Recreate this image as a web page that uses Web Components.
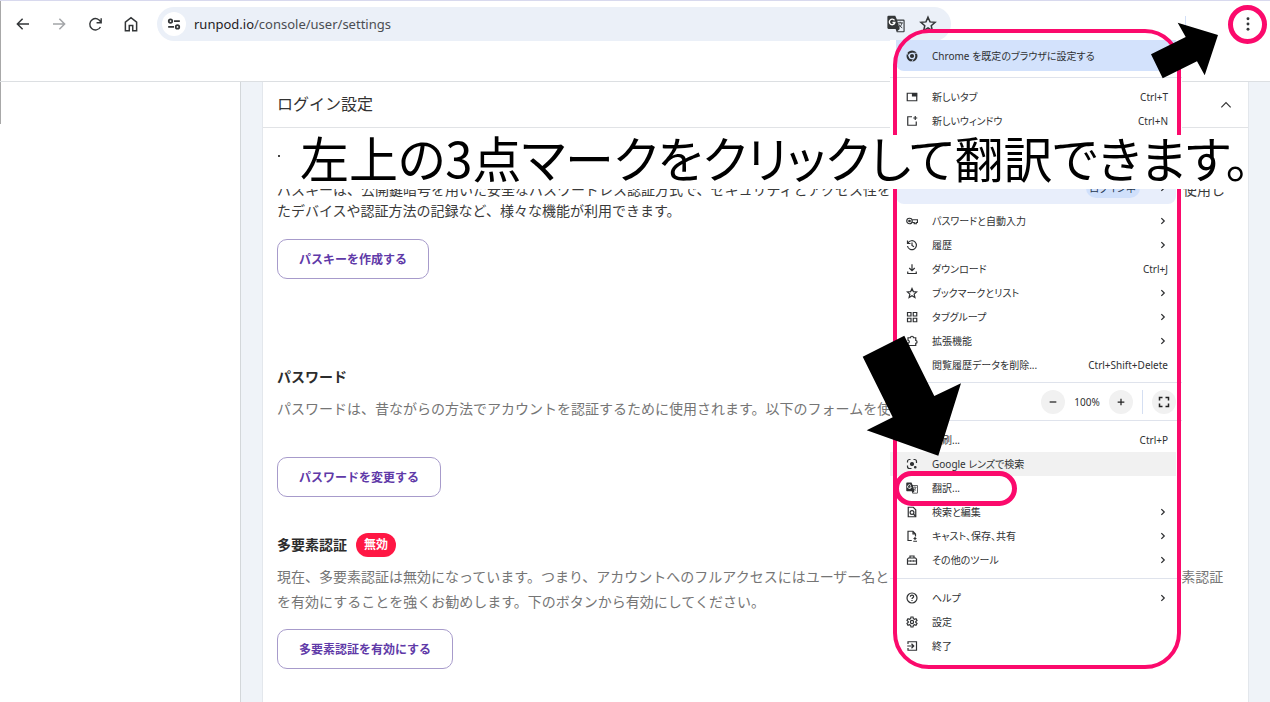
<!DOCTYPE html>
<html lang="ja">
<head>
<meta charset="utf-8">
<meta name="viewport" content="width=device-width, initial-scale=1">
<title>ログイン設定</title>
<style>
  html, body { margin: 0; min-height: 100%; }
  body {
    position: relative;
    min-height: 100vh;
    overflow: hidden;
    background: #fff;
    color: #333;
    font-family: "Noto Sans CJK JP", "Noto Sans", sans-serif;
  }
</style>
</head>
<body>
<browser-toolbar url-host="runpod.io" url-path="/console/user/settings"></browser-toolbar>

<settings-page>
  <settings-card heading="ログイン設定">
    <settings-section class="passkey" action="パスキーを作成する">パスキーは、公開鍵暗号を用いた安全なパスワードレス認証方式で、セキュリティとアクセス性を<menu-gap></menu-gap>使用したデバイスや認証方法の記録など、様々な機能が利用できます。</settings-section>
    <settings-section class="password" heading="パスワード" action="パスワードを変更する">パスワードは、昔ながらの方法でアカウントを認証するために使用されます。以下のフォームを使</settings-section>
    <settings-section class="mfa" heading="多要素認証" badge="無効" action="多要素認証を有効にする">現在、多要素認証は無効になっています。つまり、アカウントへのフルアクセスにはユーザー名と<menu-gap></menu-gap>素認証を有効にすることを強くお勧めします。下のボタンから有効にしてください。</settings-section>
  </settings-card>
</settings-page>

<browser-menu>
  <menu-item class="promo" icon="chrome">Chrome を既定のブラウザに設定する</menu-item>
  <menu-rule></menu-rule>
  <menu-item icon="tab" hint="Ctrl+T">新しいタブ</menu-item>
  <menu-item icon="window" hint="Ctrl+N">新しいウィンドウ</menu-item>
  <menu-profile>ログイン中</menu-profile>
  <menu-item icon="key" more>パスワードと自動入力</menu-item>
  <menu-item icon="history" more>履歴</menu-item>
  <menu-item icon="download" hint="Ctrl+J">ダウンロード</menu-item>
  <menu-item icon="star" more>ブックマークとリスト</menu-item>
  <menu-item icon="grid" more>タブグループ</menu-item>
  <menu-item icon="puzzle" more>拡張機能</menu-item>
  <menu-item icon="none" hint="Ctrl+Shift+Delete">閲覧履歴データを削除...</menu-item>
  <menu-rule class="tight"></menu-rule>
  <menu-zoom></menu-zoom>
  <menu-rule class="after-zoom"></menu-rule>
  <menu-item icon="none" hint="Ctrl+P">印刷...</menu-item>
  <menu-item class="active" icon="lens">Google レンズで検索</menu-item>
  <menu-item icon="translate">翻訳...</menu-item>
  <menu-item icon="find" more>検索と編集</menu-item>
  <menu-item icon="cast" more>キャスト、保存、共有</menu-item>
  <menu-item icon="toolbox" more>その他のツール</menu-item>
  <menu-rule></menu-rule>
  <menu-item icon="help" more>ヘルプ</menu-item>
  <menu-item icon="gear">設定</menu-item>
  <menu-item icon="exit">終了</menu-item>
</browser-menu>

<guide-marks>左上の3点マークをクリックして翻訳できます。</guide-marks>

<script>
const ICONS = {
  back: '<path d="M20 12H5M11.500 5L4.500 12l7 7"/>',
  forward: '<path d="M4 12h15M12.500 5l7 7-7 7"/>',
  reload: '<path d="M19 15.500A8 8 0 1 1 19.500 9M20 3v6.500h-6.500"/>',
  home: '<path d="M4.500 21V9.500L12 3.500l7.500 6V21h-5.200v-7H9.700v7z"/>',
  tune: '<circle cx="6" cy="7" r="3"/><path d="M12 7h10M2 17h10"/><circle cx="18" cy="17" r="3"/>',
  star: '<path d="M12 3l2.700 6.200 6.700.6-5.100 4.400 1.500 6.600L12 17.300l-5.800 3.500 1.500-6.600-5.100-4.400 6.700-.6z"/>',
  translate: '<path fill="currentColor" stroke="none" d="M2 1h9l2.200 5H22a1.500 1.500 0 0 1 1.500 1.500v14A1.500 1.500 0 0 1 22 23h-9l-1.500-4.500H2A1.500 1.500 0 0 1 .500 17V2.500A1.500 1.500 0 0 1 2 1zM13.700 7.500l3.300 11-3.300 3.200H22V7.500z" fill-rule="evenodd"/><path stroke="#fff" stroke-width="1.800" d="M10 7.300A3.700 3.700 0 1 0 10.500 10H7.300"/><path stroke-width="1.300" d="M14.500 10.500h6.500M17.500 9v1.500M20 10.500c-.6 3-2.500 5-4.500 6.500M15.800 12.500c1 2 2.500 3.500 4.500 4.700"/>',
  chrome: '<circle cx="12" cy="12" r="8.800" stroke-width="4.400"/><circle cx="12" cy="12" r="4.200" fill="currentColor" stroke="none"/><path stroke="#d3e2fc" stroke-width="1.600" d="M12 6.500h11M7.200 14.700L1.800 5.400M16.800 14.700l-5.400 9.300"/>',
  tab: '<path d="M2.500 4.500h19v15h-19z"/><path d="M13 5h8v5h-8z" fill="currentColor"/>',
  window: '<path d="M12 3.500H3.500v17h17V13M18.500 2v8M14.500 6h8"/>',
  key: '<circle cx="7" cy="12" r="5.500"/><circle cx="7" cy="12" r="1.500" fill="currentColor"/><path d="M12.500 9.500H23v5.500h-2.500v2.500h-4V15h-4"/>',
  history: '<path d="M4 8a9 9 0 1 1-1 6M3 3v6h6M12 7v6l4 2.500"/>',
  download: '<path d="M12 2.500V15M6.500 10l5.500 5.500 5.500-5.500M3.500 17v4h17v-4"/>',
  grid: '<path d="M3 3h7v7H3zM14.500 3h7v7h-7zM3 14.500h7v7H3zM14.500 14.500h7v7h-7z"/>',
  puzzle: '<path d="M4 5.500h5c0-4 6-4 6 0h4.500V11c3.500 0 3.500 5.500 0 5.500V21H4v-5c3.500 0 3.500-5.500 0-5.500z"/>',
  lens: '<path d="M3 9V7a4 4 0 0 1 4-4h2M15 3h2a4 4 0 0 1 4 4v3M3 15v2a4 4 0 0 0 4 4h4"/><circle cx="12" cy="12" r="3" fill="currentColor"/><circle cx="18.500" cy="18.500" r="1.500" fill="currentColor"/>',
  find: '<path d="M4.500 2.500h10l5 5v14h-15z"/><circle cx="12" cy="13" r="3.800"/><path d="M15 16l4.500 5"/>',
  cast: '<path d="M11.500 21H4V2.500h10l5 5.500v5M14 3v5h5M18 14v6M15 17h6M14.500 22.500H22"/>',
  toolbox: '<path d="M3 20.500V10.500L5 8h14l2 2.500v10zM8 8V4h8v4M3 14h18M9 12.500v3M15 12.500v3"/>',
  help: '<circle cx="12" cy="12" r="10"/><path d="M8.800 9.500c0-4.500 6.500-4 6.500-.3 0 2.500-3.300 2.500-3.300 5M12 16.200v2"/>',
  gear: '<path d="M10 2h4l.7 3.300 2.200 1.200L20 5.500l2 3.500-2.400 2.200v1.800L22 15l-2 3.500-3.100-1-2.200 1.200L14 22h-4l-.7-3.300-2.200-1.200-3.100 1L2 15l2.400-2v-1.800L2 9l2-3.500 3.100 1 2.200-1.200z"/><circle cx="12" cy="12" r="3.200"/>',
  exit: '<path d="M4 8V3.500h17v17H4V16M2.500 12H15M11 7.500l4.500 4.500-4.500 4.500"/>',
  more: '<path d="M8 5l7 7-7 7"/>',
  up: '<path d="M4 16l8-8 8 8"/>',
  minus: '<path d="M4 12h16"/>',
  plus: '<path d="M4 12h16M12 4v16"/>',
  full: '<path d="M3 9V3h6M15 3h6v6M21 15v6h-6M9 21H3v-6"/>',
  dots: '<g fill="currentColor" stroke="none"><circle cx="12" cy="4" r="2.200"/><circle cx="12" cy="12" r="2.200"/><circle cx="12" cy="20" r="2.200"/></g>',
  none: ''
};
const icon = (name, size, weight = 2) =>
  `<svg width="${size}" height="${size}" viewBox="0 0 24 24" fill="none" stroke="currentColor" stroke-width="${weight}" aria-hidden="true">${ICONS[name]}</svg>`;

class Base extends HTMLElement {
  connectedCallback() {
    if (!this.shadowRoot) this.attachShadow({ mode: 'open' }).innerHTML = this.render();
  }
}

customElements.define('browser-toolbar', class extends Base {
  render() {
    return `<style>
      :host { display: block; box-sizing: border-box; height: 82px; border-top: 1px solid #d8d9ee; border-bottom: 1px solid #dcdfe2; background: linear-gradient(#a8a8a8, #a8a8a8) 0 0 / 1px 100% no-repeat #fff; color: #333638; }
      nav { display: flex; align-items: center; gap: 16px; height: 34px; padding: 6px 12px 0 13px; }
      button { display: grid; place-items: center; width: 20px; height: 20px; padding: 0; border: 0; background: none; color: inherit; flex: none; }
      button:disabled { color: #a3a5a8; }
      svg { display: block; }
      .bar { flex: 1; display: flex; align-items: center; box-sizing: border-box; height: 34px; padding: 0 13px 0 5px; border-radius: 17px; background: #ebf0f8; gap: 12px; min-width: 0; }
      .bar .site { width: 24px; height: 24px; border-radius: 50%; background: #fff; }
      a { flex: 1; margin-left: -4px; font: 13px/20px "Noto Sans", sans-serif; color: #4a4d52; text-decoration: none; white-space: nowrap; overflow: hidden; }
      b { font-weight: 400; color: #1f2124; }
      .tools { display: flex; justify-content: flex-end; width: 255px; flex: none; }
      .tools i { width: 1px; height: 16px; margin-right: 36px; background: #d3e0f8; }
    </style>
    <nav aria-label="ブラウザ">
      <button aria-label="戻る">${icon('back', 18)}</button>
      <button aria-label="進む" disabled>${icon('forward', 18)}</button>
      <button aria-label="再読み込み">${icon('reload', 17)}</button>
      <button aria-label="ホーム">${icon('home', 18)}</button>
      <div class="bar">
        <button class="site" aria-label="サイト情報">${icon('tune', 14, 3)}</button>
        <a href="#"><b>${this.getAttribute('url-host')}</b>${this.getAttribute('url-path')}</a>
        <button aria-label="翻訳">${icon('translate', 18)}</button>
        <button aria-label="ブックマーク">${icon('star', 18)}</button>
      </div>
      <div class="tools"><i></i></div>
      <button aria-label="メニュー">${icon('dots', 16)}</button>
    </nav>`;
  }
});

customElements.define('settings-page', class extends Base {
  render() {
    return `<style>
      :host { display: grid; grid-template-columns: 241px 1fr; min-height: calc(100vh - 82px); }
      aside { border-right: 1px solid #d3d7da; background: linear-gradient(#a8a8a8, #a8a8a8) 0 0 / 1px 42px no-repeat #fff; }
      main { padding: 0 21px; background: #eff3f8; display: grid; }
    </style><aside></aside><main><slot></slot></main>`;
  }
});

customElements.define('settings-card', class extends Base {
  render() {
    return `<style>
      :host { display: block; border: solid #e3e7ec; border-width: 0 1px; background: #fff; }
      header { display: flex; align-items: center; justify-content: space-between; height: 45px; padding: 0 14px; border-bottom: 1px solid #e1e3e6; }
      h1 { margin: 0; padding-bottom: 4px; font-size: 16px; line-height: 24px; font-weight: 400; color: #333; }
      button { display: grid; place-items: center; width: 16px; height: 16px; padding: 0; border: 0; background: none; color: #333; }
      .body { padding: 0 14px; }
    </style>
    <header><h1>${this.getAttribute('heading')}</h1><button aria-label="閉じる">${icon('up', 14)}</button></header>
    <div class="body"><slot></slot></div>`;
  }
});

/* Keeps the run of a line clear beneath the open menu. */
customElements.define('menu-gap', class extends Base {
  render() {
    return '<style>:host { display: inline-block; width: 292px; }</style>';
  }
});

customElements.define('settings-section', class extends Base {
  render() {
    const h = this.getAttribute('heading'), b = this.getAttribute('badge');
    return `<style>
      :host { display: block; }
      :host(.passkey) { padding-top: 51px; }
      :host(.password) { padding-top: 86px; }
      :host(.mfa) { padding-top: 36px; }
      header { display: flex; align-items: center; gap: 9px; height: 24px; margin-bottom: 7px; }
      h2 { margin: 0; padding-bottom: 2px; font-size: 14px; line-height: 22px; font-weight: 700; color: #2c2c2c; }
      header span { padding: 0 8px 2px; border-radius: 12px; background: #ff1744; color: #fff; font-size: 12px; line-height: 22px; font-weight: 700; }
      p { margin: 0; font-size: 14px; line-height: 25px; color: #757575; font-weight: 400; }
      :host(.passkey) p { line-height: 21px; color: #3a3a3a; }
      button { display: block; height: 40px; padding: 0 21px; border: 1px solid #a79bcb; border-radius: 10px; background: #fff; color: #5f3aa8; font: 700 12px/20px "Noto Sans CJK JP", sans-serif; }
      :host(.passkey) button { margin-top: 18px; }
      :host(.password) button { margin-top: 36px; }
      :host(.mfa) button { margin-top: 15px; }
    </style>
    ${h ? `<header><h2>${h}</h2>${b ? `<span>${b}</span>` : ''}</header>` : ''}
    <p><slot></slot></p>
    <button>${this.getAttribute('action')}</button>`;
  }
});

customElements.define('browser-menu', class extends Base {
  render() {
    return `<style>
      :host { position: absolute; top: 40px; right: 88px; display: block; width: 292px; padding-bottom: 8px; background: #fff; color: #2f3133; font: 10px/16px "Noto Sans", "Noto Sans CJK JP", sans-serif; font-feature-settings: "palt"; border-radius: 0 0 36px 36px; }
    </style><div role="menu"><slot></slot></div>`;
  }
});

customElements.define('menu-rule', class extends Base {
  render() {
    return `<style>
      :host { display: block; height: 1px; margin: 6px 0 7px; background: #dfe3ec; }
      :host(.tight) { margin: 5px 0 0; }
      :host(.after-zoom) { margin-top: 0; }
    </style>`;
  }
});

customElements.define('menu-item', class extends Base {
  render() {
    const hint = this.getAttribute('hint');
    return `<style>
      :host { display: block; }
      button { display: flex; align-items: center; gap: 14px; box-sizing: border-box; width: 100%; height: 24px; padding: 0 14px 0 16px; border: 0; background: none; color: inherit; font: inherit; font-feature-settings: inherit; text-align: left; }
      svg { flex: none; }
      .label { flex: 1; white-space: nowrap; }
      :host(.promo) { padding: 0 6px; }
      :host(.promo) button { height: 31px; padding-left: 10px; border-radius: 0 0 8px 8px; background: #d3e2fc; }
      :host(.active) { background: linear-gradient(#f1f1f1, #f1f1f1) 0 0 / calc(100% - 6px) 100% no-repeat; }
    </style>
    <button role="menuitem">${icon(this.getAttribute('icon'), 12, 2.4)}<span class="label"><slot></slot></span>${hint ? `<span>${hint}</span>` : ''}${this.hasAttribute('more') ? icon('more', 10, 3) : ''}</button>`;
  }
});

customElements.define('menu-profile', class extends Base {
  render() {
    return `<style>
      :host { display: flex; align-items: center; justify-content: flex-end; gap: 18px; height: 32px; margin: 39px 6px 5px; padding-right: 8px; border-radius: 8px; background: #e8eefb; }
      span { padding: 2px 4px; border-radius: 10px; background: #d0e0fb; color: #24364f; }
    </style><span><slot></slot></span>${icon('more', 10, 3)}`;
  }
});

customElements.define('menu-zoom', class extends Base {
  render() {
    return `<style>
      :host { display: flex; align-items: center; justify-content: flex-end; height: 37px; padding-right: 6px; }
      button { display: grid; place-items: center; width: 24px; height: 24px; padding: 0; border: 0; border-radius: 50%; background: #f1f1f1; color: #222; }
      output { width: 44px; text-align: center; }
      i { width: 1px; height: 24px; margin: 0 9px; background: #d5dff2; }
    </style>
    <button aria-label="縮小">${icon('minus', 10, 3)}</button><output>100%</output>
    <button aria-label="拡大">${icon('plus', 10, 3)}</button><i></i>
    <button aria-label="全画面">${icon('full', 12, 3)}</button>`;
  }
});

customElements.define('guide-marks', class extends Base {
  render() {
    return `<style>
      :host { --mark: #fb0a6c; }
      .frame, .circle, .pick, .caption, svg { position: absolute; box-sizing: border-box; pointer-events: none; }
      .frame { top: 29px; right: 89px; width: 288px; height: 640px; border: 4px solid var(--mark); border-radius: 36px; }
      .circle { top: 5px; right: 3px; width: 39px; height: 39px; border: 5px solid var(--mark); border-radius: 50%; }
      .pick { top: 471px; right: 253px; width: 123px; height: 35px; border: 5px solid var(--mark); border-radius: 18px; }
      .caption { top: 135px; left: 270px; right: 22px; height: 54px; margin: 0; padding-left: 30px; background: #fff; color: #000; font: 400 49px/44px "Noto Sans CJK JP", sans-serif; font-feature-settings: "palt"; white-space: nowrap; }
      .caption::before { content: ""; position: absolute; top: 20px; left: 8px; width: 2px; height: 2px; background: #444; }
      svg { top: 0; right: 0; }
    </style>
    <div class="frame"></div><div class="circle"></div><div class="pick"></div>
    <p class="caption"><slot></slot></p>
    <svg width="410" height="460" viewBox="860 0 410 460" aria-hidden="true">
      <path d="M1177.700 22.700L1218 35l-13.300 40.300-7.700-14-34.300 17-11.700-24 34.700-17.300zM904.300 335.700l-41.600 21 30 60.600-26 13 71.600 25.400L961 383.300 934.300 396z"/>
    </svg>`;
  }
});
</script>
</body>
</html>
